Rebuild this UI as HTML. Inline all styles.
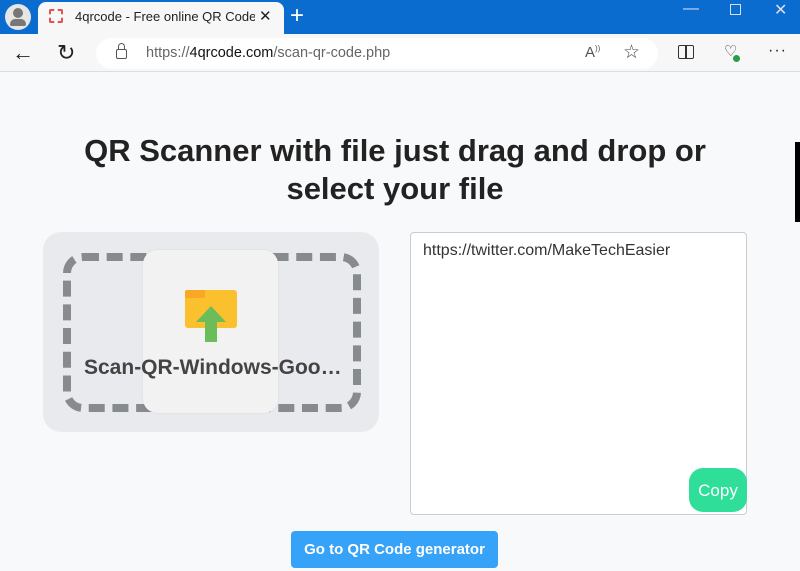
<!DOCTYPE html>
<html><head><style>
*{margin:0;padding:0;box-sizing:border-box}
body{width:800px;height:571px;overflow:hidden;background:#f8f9fa;font-family:"Liberation Sans",sans-serif;position:relative}
.a{position:absolute}
</style></head><body>
<div class="a" style="left:0;top:0;width:800px;height:34px;background:#0a6ccf"></div>
<div class="a" style="left:5px;top:4px;width:26px;height:26px;border-radius:50%;background:#e6e6e6;overflow:hidden"></div>
<div class="a" style="left:13px;top:8px;width:10px;height:10px;border-radius:50%;background:#777"></div>
<div class="a" style="left:10px;top:19px;width:16px;height:7px;border-radius:8px 8px 3px 3px;background:#777"></div>
<div class="a" style="left:38px;top:2px;width:246px;height:34px;background:#f7f7f7;border-radius:8px 8px 0 0"></div>
<div class="a" style="left:49px;top:9px;width:14px;height:14px;border:2px dashed #d55;border-radius:2px"></div>
<div class="a" style="left:75px;top:9px;width:180px;overflow:hidden;white-space:nowrap;font-size:13px;color:#222">4qrcode - Free online QR Code r</div>
<div class="a" style="left:259px;top:7px;font-size:15px;color:#222">✕</div>
<div class="a" style="left:290px;top:2px;font-size:24px;color:#fff;font-weight:300">+</div>
<div class="a" style="left:683px;top:0;font-size:16px;color:#dde">—</div>
<div class="a" style="left:730px;top:4px;width:11px;height:11px;border:1px solid #dde"></div>
<div class="a" style="left:774px;top:0px;font-size:16px;color:#dde">✕</div>
<div class="a" style="left:0;top:34px;width:800px;height:38px;background:#f7f7f7;border-bottom:1px solid #ddd"></div>
<div class="a" style="left:12px;top:40px;font-size:22px;color:#222">←</div>
<div class="a" style="left:57px;top:40px;font-size:22px;color:#222">↻</div>
<div class="a" style="left:96px;top:38px;width:562px;height:31px;background:#fff;border-radius:16px"></div>
<div class="a" style="left:116px;top:49px;width:11px;height:10px;border:1.5px solid #555;border-radius:2px"></div>
<div class="a" style="left:118px;top:43px;width:7px;height:7px;border:1.5px solid #555;border-bottom:none;border-radius:4px 4px 0 0"></div>
<div class="a" style="left:146px;top:45px;font-size:14.5px;color:#666">https://<span style="color:#111">4qrcode.com</span>/scan-qr-code.php</div>
<div class="a" style="left:585px;top:44px;font-size:15px;color:#555">A<sup style="font-size:8px">))</sup></div>
<div class="a" style="left:623px;top:41px;font-size:19px;color:#444">☆</div>
<div class="a" style="left:678px;top:45px;width:16px;height:14px;border:1.5px solid #333;border-radius:2px"></div>
<div class="a" style="left:685px;top:45px;width:1.5px;height:14px;background:#333"></div>
<div class="a" style="left:724px;top:42px;font-size:15px;color:#333">♡</div>
<div class="a" style="left:733px;top:55px;width:7px;height:7px;border-radius:50%;background:#2a9d48"></div>
<div class="a" style="left:768px;top:42px;font-size:16px;color:#222;letter-spacing:1px">···</div>
<div class="a" style="left:795px;top:142px;width:5px;height:80px;background:#000"></div>
<div class="a" style="left:0;top:132px;width:790px;text-align:center;font-size:31px;font-weight:bold;color:#222;line-height:38px">QR Scanner with file just drag and drop or<br>select your file</div>
<div class="a" style="left:43px;top:232px;width:336px;height:200px;background:#e8eaed;border-radius:18px"></div>
<div class="a" style="left:63px;top:253px;width:298px;height:159px;border:8px dashed #888b8e;border-radius:20px"></div>
<div class="a" style="left:143px;top:250px;width:135px;height:163px;background:#f2f2f2;border-radius:14px;box-shadow:0 0 2px rgba(0,0,0,.08)"></div>
<div class="a" style="left:185px;top:290px;width:52px;height:38px;background:#fbc02d;border-radius:3px"></div>
<div class="a" style="left:185px;top:290px;width:20px;height:8px;background:#f9a825;border-radius:2px"></div>
<svg class="a" style="left:196px;top:306px" width="30" height="36"><path d="M15 0 L30 16 L21 16 L21 36 L9 36 L9 16 L0 16Z" fill="#6cbd5a"/></svg>
<div class="a" style="left:84px;top:356px;font-size:21px;font-weight:bold;color:#444">Scan-QR-Windows-Goo…</div>
<div class="a" style="left:410px;top:232px;width:337px;height:283px;background:#fff;border:1px solid #ccc;border-radius:4px"></div>
<div class="a" style="left:423px;top:242px;font-size:16px;color:#333">https://twitter.com/MakeTechEasier</div>
<div class="a" style="left:689px;top:468px;width:58px;height:44px;background:#2fde98;border-radius:14px;color:#fff;font-size:17px;text-align:center;line-height:46px">Copy</div>
<div class="a" style="left:291px;top:531px;width:207px;height:37px;background:#36a2f8;border-radius:4px;color:#fff;font-size:15px;font-weight:bold;text-align:center;line-height:37px">Go to QR Code generator</div>
</body></html>
